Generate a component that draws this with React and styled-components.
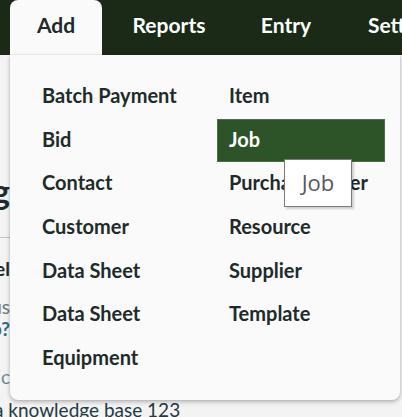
import styled, { createGlobalStyle } from "styled-components";

const GlobalStyle = createGlobalStyle`
  html, body {
    margin: 0;
    padding: 0;
    background: #f2f3f2;
    overflow: hidden;
  }
  body {
    font-family: "Lato", "Open Sans", sans-serif;
  }
`;

const Page = styled.div`
  position: relative;
  width: 402px;
  height: 417px;
  overflow: hidden;
`;

const NavBar = styled.nav`
  display: flex;
  align-items: stretch;
  height: 55px;
  padding-left: 10px;
  background: #1a2a16;
`;

const NavTab = styled.div`
  display: flex;
  align-items: center;
  justify-content: ${(p) => (p.$start ? "flex-start" : "center")};
  width: ${(p) => p.$width}px;
  padding: 0 0 7px ${(p) => (p.$start ? 32 : 0)}px;
  flex-shrink: 0;
  box-sizing: border-box;
  font-size: 21px;
  font-weight: 700;
  white-space: nowrap;
  color: ${(p) => (p.$open ? "#1d2b2b" : "#ffffff")};
  background: ${(p) => (p.$open ? "#fafafa" : "transparent")};
  border-radius: 8px 8px 0 0;
`;

const Content = styled.main`
  display: flex;
  flex-direction: column;
  margin-left: -120px;
  width: 130px;
`;

const Heading = styled.h1`
  margin: 116px 0 0;
  text-align: right;
  font-size: 34px;
  font-weight: 700;
  color: #1d2b2b;
  height: 40px;
  line-height: 40px;
`;

const Rule = styled.hr`
  margin: 26px 0 0;
  border: 0;
  border-top: 1px solid #c2c4c2;
`;

const Line = styled.p`
  margin: ${(p) => p.$gap}px 0 0;
  text-align: right;
  font-size: 19px;
  line-height: 22px;
  font-weight: ${(p) => (p.$bold ? 700 : 400)};
  color: ${(p) => p.$color || "#1d2b2b"};
`;

const Footer = styled.p`
  margin: 11px 0 0 114px;
  font-size: 19px;
  line-height: 22px;
  white-space: nowrap;
  color: #1e3a45;
`;

const Menu = styled.div`
  position: absolute;
  top: 55px;
  left: 10px;
  width: 390px;
  box-sizing: border-box;
  padding: 20px 15px 20px 20px;
  display: flex;
  gap: 19px;
  background: #fafafa;
  border-radius: 0 0 8px 8px;
  box-shadow: 0 2px 4px rgba(0, 0, 0, 0.25), 0 0 2px rgba(0, 0, 0, 0.12);
`;

const Column = styled.ul`
  list-style: none;
  margin: 0;
  padding: 0;
  width: 168px;
  display: flex;
  flex-direction: column;
`;

const Item = styled.li`
  height: 43.6px;
  display: flex;
  align-items: center;
  padding: 0 0 3px 11px;
  box-sizing: border-box;
  font-size: 20px;
  font-weight: 700;
  color: ${(p) => (p.$active ? "#ffffff" : "#1d2b2b")};
  background: ${(p) => (p.$active ? "#2c5428" : "transparent")};
  border: 1px solid ${(p) => (p.$active ? "#4a6e47" : "transparent")};
`;

const Tooltip = styled.div`
  position: absolute;
  top: 159px;
  left: 284px;
  width: 68px;
  height: 48px;
  box-sizing: border-box;
  display: flex;
  align-items: center;
  justify-content: center;
  padding-bottom: 2px;
  background: #ffffff;
  border: 1px solid #7a7a7a;
  box-shadow: 2px 2px 2px rgba(0, 0, 0, 0.18);
  font-family: "Open Sans", "Noto Sans", sans-serif;
  font-size: 22px;
  color: #5a5560;
`;

const leftItems = [
  "Batch Payment",
  "Bid",
  "Contact",
  "Customer",
  "Data Sheet",
  "Data Sheet",
  "Equipment",
];

const rightItems = [
  "Item",
  "Job",
  "Purchase Order",
  "Resource",
  "Supplier",
  "Template",
];

export default function App() {
  return (
    <Page>
      <GlobalStyle />
      <NavBar>
        <NavTab $open $width={92}>Add</NavTab>
        <NavTab $width={134}>Reports</NavTab>
        <NavTab $width={100}>Entry</NavTab>
        <NavTab $start $width={140}>Settings</NavTab>
      </NavBar>

      <Content>
        <Heading>Catalog</Heading>
        <Rule />
        <Line $gap={20} $bold>Label</Line>
        <Line $gap={16} $color="#6c7a7a">Status</Line>
        <Line $gap={0} $bold $color="#2a6b8a">Help?</Line>
        <Line $gap={26} $color="#6c8a9a">Topic</Line>
        <Footer>a knowledge base 123</Footer>
      </Content>

      <Menu>
        <Column>
          {leftItems.map((label, i) => (
            <Item key={i}>{label}</Item>
          ))}
        </Column>
        <Column>
          {rightItems.map((label) => (
            <Item key={label} $active={label === "Job"}>
              {label}
            </Item>
          ))}
        </Column>
      </Menu>

      <Tooltip>Job</Tooltip>
    </Page>
  );
}
